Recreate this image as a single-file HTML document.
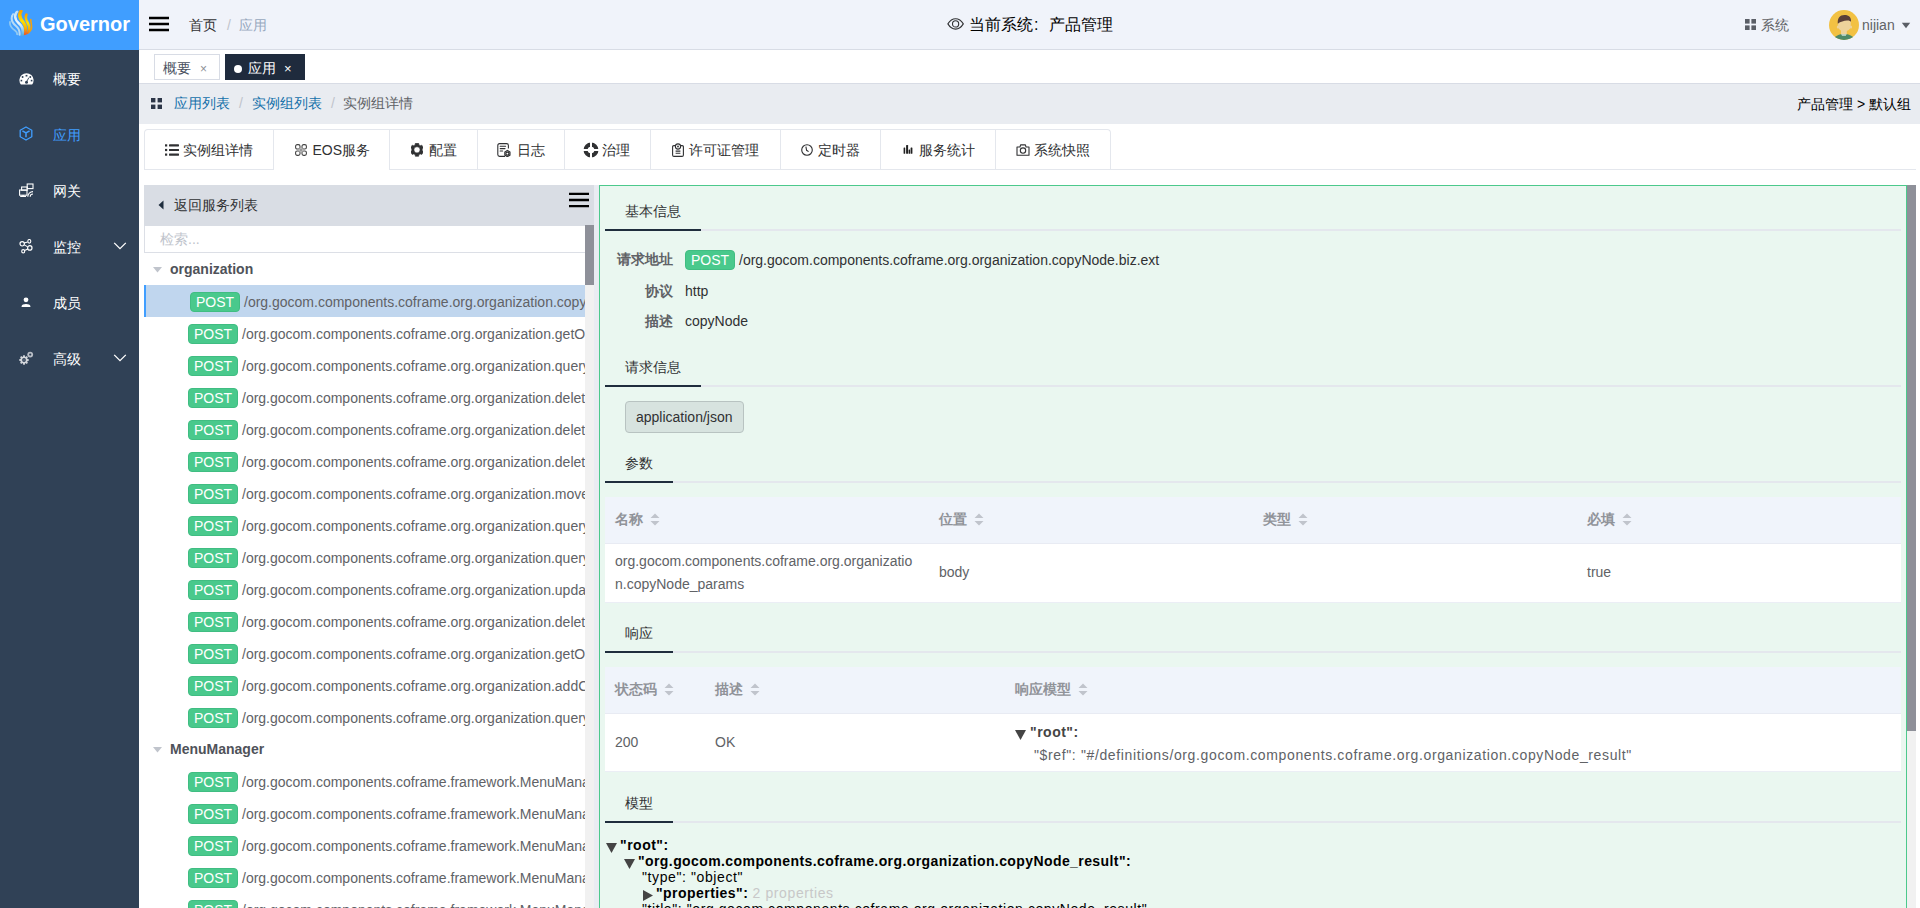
<!DOCTYPE html>
<html><head><meta charset="utf-8">
<style>
*{box-sizing:border-box;margin:0;padding:0}
html,body{width:1920px;height:908px;overflow:hidden;background:#fff;font-family:"Liberation Sans",sans-serif;font-size:14px;color:#303133}
.abs{position:absolute}
#side{position:absolute;left:0;top:0;width:139px;height:908px;background:#304156}
#logo{position:absolute;left:0;top:0;width:139px;height:50px;background:#409eff}
#logo .t{position:absolute;left:40px;top:12px;font-size:20px;font-weight:bold;color:#fff;line-height:24px}
.mi{position:absolute;left:0;width:139px;height:56px;color:#fff}
.mi .tx{position:absolute;left:53px;top:1px;line-height:56px;font-size:14px;font-weight:500}
.mi svg{position:absolute;left:19px;top:21px}
.mi .chev{position:absolute;left:113px;top:24px}
#hdr{position:absolute;left:139px;top:0;width:1781px;height:50px;background:#f0f3fa;border-bottom:1px solid #d8dce5}
#tags{position:absolute;left:139px;top:50px;width:1781px;height:34px;background:#fff;border-bottom:1px solid #d8dce5}
.tag{position:absolute;top:4px;height:26px;border:1px solid #d8dce5;line-height:24px;font-size:14px;color:#495060}
#bc{position:absolute;left:139px;top:84px;width:1781px;height:40px;background:#e9ecf1}
#tabs{position:absolute;left:144px;top:129px;width:1772px;height:41px;border-bottom:1px solid #e4e7ed}
#tabnav{position:absolute;left:0;top:0;height:41px;border:1px solid #e4e7ed;border-bottom:none;border-radius:4px 4px 0 0;display:flex}
.tt{position:absolute;top:1px;line-height:40px;color:#303133;white-space:nowrap}
.grp{line-height:16px;font-weight:bold;color:#4f5259;white-space:nowrap}
.post{height:20px;width:50px;border:1px solid #40bd82;background:#49c98c;color:#fff;border-radius:4px;line-height:18px;text-align:center;font-size:14px}
.path{line-height:16px;color:#606266;white-space:nowrap}
.tb{height:40px;line-height:40px;padding:0 20px;border-left:1px solid #e4e7ed;color:#303133;font-size:14px;white-space:nowrap;display:flex;align-items:center}
.tb:first-child{border-left:none}
.tb svg{margin-right:4px}
#lp{position:absolute;left:144px;top:185px;width:450px;height:723px;background:#fff;overflow:hidden}
#lph{position:absolute;left:0;top:0;width:450px;height:41px;background:#d9dde4}
#gap{position:absolute;left:594px;top:185px;width:5px;height:723px;background:#e9ecf2}
#rp{position:absolute;left:599px;top:185px;width:1308px;height:723px;background:#eaf7f0;border:1px solid #4cc98c;border-bottom:none;overflow:hidden}
#sb2{position:absolute;left:1907px;top:185px;width:9px;height:723px;background:#f1f1f1}
#sb2 .th{position:absolute;left:0;top:0;width:9px;height:546px;background:#8e9099}
</style></head><body>
<div id="side">
  <div id="logo">
    <svg class="abs" style="left:8px;top:10px" width="26" height="26" viewBox="0 0 26 26">
      <defs>
        <linearGradient id="lgo" x1="0" y1="0" x2="0" y2="1"><stop offset="0" stop-color="#f9a000"/><stop offset="0.45" stop-color="#ffe000"/><stop offset="0.75" stop-color="#f7b000"/><stop offset="1" stop-color="#e8602a"/></linearGradient>
        <clipPath id="lgc"><circle cx="13" cy="13" r="12.9"/></clipPath><linearGradient id="lgb" x1="0" y1="0" x2="0" y2="1"><stop offset="0" stop-color="#bfe0f5"/><stop offset="0.5" stop-color="#eef6fb"/><stop offset="1" stop-color="#56b0e0"/></linearGradient>
      </defs>
      <g clip-path="url(#lgc)"><path d="M13 1 C10.5 4.5 12 8.5 15 12 C17.5 15 18.5 19 17 24" stroke="url(#lgo)" stroke-width="3.4" fill="none" stroke-linecap="round"/>
      <path d="M18.5 4.5 C17 7 18 10 20 13.5 C21.8 17 21.5 21 19.5 24" stroke="url(#lgo)" stroke-width="2.6" fill="none" stroke-linecap="round"/>
      <path d="M22.8 9.5 C22.5 12 24 15 23.5 18.5 C23 21 22 22.5 20.5 24" stroke="#f2a010" stroke-width="1.6" fill="none" stroke-linecap="round"/>
      <path d="M9 1.5 C5.5 6 7.5 10.5 11 13.5 C14 16 15.5 20 14.5 25" stroke="url(#lgb)" stroke-width="2.6" fill="none" stroke-linecap="round"/>
      <path d="M5 4 C2 9 4.5 13 8 16 C11 18.5 12 21.5 11.5 25" stroke="#c6e2f4" stroke-width="2" fill="none" stroke-linecap="round" opacity="0.9"/>
      <path d="M2 12 C1.5 15.5 4 18.5 7 20.5 C9 22 9.5 23.5 9 25" stroke="#9fd0ee" stroke-width="1.8" fill="none" stroke-linecap="round" opacity="0.85"/>
    </g></svg>
    <span class="t">Governor</span>
  </div>
  <div class="mi" style="top:50px">
    <svg width="15" height="12" viewBox="0 0 15 12" style="left:19px;top:23px"><path d="M1.9 11.6 A7.1 7.1 0 1 1 13.1 11.6 Z" fill="#fff"/><rect x="6.6" y="1.9" width="1.8" height="1.6" fill="#304156"/><circle cx="3.6" cy="4" r="0.95" fill="#304156"/><circle cx="11.3" cy="4" r="0.95" fill="#304156"/><rect x="1.6" y="6.8" width="1.6" height="1.6" fill="#304156"/><rect x="11.8" y="6.8" width="1.6" height="1.6" fill="#304156"/><circle cx="7.5" cy="9.3" r="1.5" fill="#304156"/><path d="M7.3 9.3 L9.9 4.6" stroke="#304156" stroke-width="0.9"/></svg>
    <span class="tx">概要</span>
  </div>
  <div class="mi" style="top:106px;color:#409eff">
    <svg width="14" height="15" viewBox="0 0 14 15" style="left:19px;top:20px"><path d="M7 1 L12.8 4.2 L12.8 10.8 L7 14 L1.2 10.8 L1.2 4.2 Z" stroke="#409eff" stroke-width="1.3" fill="none" stroke-linejoin="round"/><path d="M3.4 4.9 L7 7 L10.6 4.9 M7 7 L7 11.2" stroke="#409eff" stroke-width="1.5" fill="none"/></svg>
    <span class="tx">应用</span>
  </div>
  <div class="mi" style="top:162px">
    <svg width="15" height="15" viewBox="0 0 15 15" style="left:19px;top:21px"><rect x="8.2" y="1" width="5.8" height="4.6" stroke="#fff" stroke-width="1.1" fill="none"/><rect x="2.6" y="4" width="5.6" height="3.2" stroke="#fff" stroke-width="1.1" fill="none"/><rect x="0.6" y="7" width="7.4" height="5.2" stroke="#fff" stroke-width="1.1" fill="none"/><path d="M1.2 13.4 H7 M4.1 12 V13.4" stroke="#fff" stroke-width="1.3"/><path d="M8.8 13.8 A5.2 5.2 0 0 1 14 8.6 M11.2 13.8 A2.8 2.8 0 0 1 14 11" stroke="#fff" stroke-width="1.1" fill="none"/></svg>
    <span class="tx">网关</span>
  </div>
  <div class="mi" style="top:218px">
    <svg width="15" height="15" viewBox="0 0 15 15" style="left:19px;top:21px"><circle cx="3.2" cy="4.8" r="2.2" stroke="#fff" stroke-width="1.2" fill="none"/><circle cx="10.8" cy="8.9" r="2.2" stroke="#fff" stroke-width="1.2" fill="none"/><ellipse cx="10.3" cy="2.3" rx="1.5" ry="1.8" stroke="#fff" stroke-width="1.1" fill="none"/><ellipse cx="4.2" cy="12.3" rx="1.5" ry="1.7" stroke="#fff" stroke-width="1.1" fill="none"/><path d="M5.3 5.9 L8.7 7.9 M8.8 9.9 L5.6 11.4 M5.3 4 L8.6 2.9" stroke="#fff" stroke-width="1.1"/></svg>
    <span class="tx">监控</span>
    <svg class="chev" width="14" height="8" viewBox="0 0 14 8" style="left:113px;top:24px"><path d="M1.2 0.9 L7 6.7 L12.8 0.9" stroke="#fff" stroke-width="1.3" fill="none"/></svg>
  </div>
  <div class="mi" style="top:274px">
    <svg width="10" height="11" viewBox="0 0 10 11" style="left:21px;top:23px"><circle cx="5" cy="2.8" r="2.4" fill="#fff"/><path d="M0.6 9.2 C0.6 6.4 9.4 6.4 9.4 9.2 L9.4 10 L0.6 10 Z" fill="#fff"/></svg>
    <span class="tx">成员</span>
  </div>
  <div class="mi" style="top:330px">
    <svg width="15" height="14" viewBox="0 0 15 14" style="left:19px;top:21px"><g fill="#d4d7dc"><rect x="4.05" y="4.3" width="1.9" height="9.4" transform="rotate(0 5 9)"/><rect x="4.05" y="4.3" width="1.9" height="9.4" transform="rotate(45 5 9)"/><rect x="4.05" y="4.3" width="1.9" height="9.4" transform="rotate(90 5 9)"/><rect x="4.05" y="4.3" width="1.9" height="9.4" transform="rotate(135 5 9)"/><circle cx="5" cy="9" r="3.6"/></g><circle cx="5" cy="9" r="1.9" fill="#304156"/><circle cx="5" cy="9" r="0.7" fill="#8a93a0"/><circle cx="11.2" cy="3.6" r="2.9" fill="#b9bec6"/><circle cx="11.2" cy="3.6" r="1.1" fill="#304156"/></svg>
    <span class="tx">高级</span>
    <svg class="chev" width="14" height="8" viewBox="0 0 14 8" style="left:113px;top:24px"><path d="M1.2 0.9 L7 6.7 L12.8 0.9" stroke="#fff" stroke-width="1.3" fill="none"/></svg>
  </div>
</div>
<div id="hdr">
  <svg class="abs" style="left:10px;top:16px" width="20" height="16" viewBox="0 0 20 16"><path d="M0 2 H20 M0 8 H20 M0 14 H20" stroke="#000" stroke-width="2.6"/></svg>
  <span class="abs" style="left:50px;top:17px;line-height:16px;color:#303133">首页</span>
  <span class="abs" style="left:88px;top:17px;line-height:16px;color:#c0c4cc">/</span>
  <span class="abs" style="left:100px;top:17px;line-height:16px;color:#97a8be">应用</span>
  <svg class="abs" style="left:808px;top:18px" width="18" height="12" viewBox="0 0 18 12"><path d="M0.9 5.9 C3.5 1.6 6 0.7 8.6 0.7 C11.2 0.7 13.7 1.6 16.3 5.9 C13.7 10.2 11.2 11.1 8.6 11.1 C6 11.1 3.5 10.2 0.9 5.9Z" stroke="#303133" stroke-width="1.1" fill="none"/><circle cx="8.6" cy="5.9" r="3.1" stroke="#303133" stroke-width="1.1" fill="none"/></svg>
  <span class="abs" style="left:830px;top:16px;line-height:18px;font-size:16px;color:#000">当前系统<span style="display:inline-block;width:16px;padding-left:1px">:</span>产品管理</span>
  <svg class="abs" style="left:1606px;top:19px" width="11" height="11" viewBox="0 0 11 11"><g fill="#5a5e66"><rect x="0" y="0" width="4.6" height="4.6"/><rect x="6.4" y="0" width="4.6" height="4.6"/><rect x="0" y="6.4" width="4.6" height="4.6"/><rect x="6.4" y="6.4" width="4.6" height="4.6"/></g></svg>
  <span class="abs" style="left:1622px;top:17px;line-height:16px;color:#606266">系统</span>
  <svg class="abs" style="left:1690px;top:10px" width="30" height="30" viewBox="0 0 30 30"><defs><clipPath id="av"><circle cx="15" cy="15" r="15"/></clipPath></defs><circle cx="15" cy="15" r="15" fill="#f2c143"/><g clip-path="url(#av)"><path d="M3.5 31 C5 26 10 24 15 24 C20 24 25 26 26.5 31Z" fill="#4e8a68"/><rect x="12" y="18" width="5.8" height="6.4" fill="#eed39b"/><path d="M12.3 24.2 H17.5 L16.8 25.8 H13Z" fill="#cfe0d8"/><ellipse cx="8.9" cy="17" rx="1.1" ry="1.6" fill="#eed39b"/><ellipse cx="22" cy="17" rx="1.1" ry="1.6" fill="#eed39b"/><path d="M9 12 C9 9 11.5 8 15.3 8 C19 8 21.8 9.5 21.8 12.5 L21.6 17 C21.2 19.5 19 21.2 15.3 21.2 C11.8 21.2 9.5 19.5 9.2 17Z" fill="#eed39b"/><path d="M8.8 13.8 C8.3 8 10.8 4.9 15.5 4.9 C20 4.9 22.5 7.5 22 11.8 C21 10.8 19.8 10.2 18 10.5 C15 10.9 11.5 11.5 8.8 13.8Z" fill="#5b4038"/></g></svg>
  <span class="abs" style="left:1723px;top:17px;line-height:16px;color:#606266">nijian</span>
  <svg class="abs" style="left:1762px;top:22px" width="10" height="7" viewBox="0 0 10 7"><path d="M0.8 0.8 L9.2 0.8 L5 6.2Z" fill="#5a5e66"/></svg>
</div>
<div id="tags">
  <div class="tag" style="left:15px;width:66px;color:#495060"><span class="abs" style="left:8px;top:5px;line-height:16px">概要</span><span class="abs" style="left:45px;top:6px;line-height:16px;font-size:12px;color:#8e9097">×</span></div>
  <div class="tag" style="left:86px;width:80px;background:#1f2b3d;border-color:#1f2b3d;color:#fff"><span class="abs" style="left:8px;top:10px;width:8px;height:8px;border-radius:50%;background:#fff"></span><span class="abs" style="left:22px;top:5px;line-height:16px">应用</span><span class="abs" style="left:58px;top:6px;line-height:16px;font-size:13px">×</span></div>
</div>
<div id="bc">
  <svg class="abs" style="left:12px;top:14px" width="11" height="11" viewBox="0 0 11 11"><g fill="#2c3648"><rect x="0" y="0" width="4.4" height="4.4"/><rect x="6.6" y="0" width="4.4" height="4.4"/><rect x="0" y="6.6" width="4.4" height="4.4"/><rect x="6.6" y="6.6" width="4.4" height="4.4"/></g></svg>
  <span class="abs" style="left:35px;top:11px;line-height:16px;color:#1470aa">应用列表</span>
  <span class="abs" style="left:100px;top:11px;line-height:16px;color:#c0c4cc">/</span>
  <span class="abs" style="left:113px;top:11px;line-height:16px;color:#1470aa">实例组列表</span>
  <span class="abs" style="left:192px;top:11px;line-height:16px;color:#c0c4cc">/</span>
  <span class="abs" style="left:204px;top:11px;line-height:16px;color:#606266">实例组详情</span>
  <span class="abs" style="left:1658px;top:12px;line-height:16px;color:#000">产品管理 &gt; 默认组</span>
</div>
<div id="tabs"><div id="tabnav" style="width:967px"></div>
<div class="abs" style="left:129px;top:1px;width:1px;height:40px;background:#e4e7ed"></div>
<div class="abs" style="left:245px;top:1px;width:1px;height:40px;background:#e4e7ed"></div>
<div class="abs" style="left:333px;top:1px;width:1px;height:40px;background:#e4e7ed"></div>
<div class="abs" style="left:420px;top:1px;width:1px;height:40px;background:#e4e7ed"></div>
<div class="abs" style="left:506px;top:1px;width:1px;height:40px;background:#e4e7ed"></div>
<div class="abs" style="left:636px;top:1px;width:1px;height:40px;background:#e4e7ed"></div>
<div class="abs" style="left:736px;top:1px;width:1px;height:40px;background:#e4e7ed"></div>
<div class="abs" style="left:851px;top:1px;width:1px;height:40px;background:#e4e7ed"></div>
<div class="abs" style="left:130px;top:40px;width:115px;height:2px;background:#fff"></div>
<svg class="abs" style="left:21px;top:15px" width="14" height="12" viewBox="0 0 14 12"><g fill="#303133"><rect x="0" y="0.3" width="2.2" height="2.2"/><rect x="0" y="4.9" width="2.2" height="2.2"/><rect x="0" y="9.5" width="2.2" height="2.2"/><rect x="4" y="0.3" width="10" height="2.2" rx="0.4"/><rect x="4" y="4.9" width="10" height="2.2" rx="0.4"/><rect x="4" y="9.5" width="10" height="2.2" rx="0.4"/></g></svg>
<span class="abs tt" style="left:38.5px">实例组详情</span>
<svg class="abs" style="left:151px;top:15px" width="12" height="12" viewBox="0 0 12 12"><g stroke="#444" stroke-width="1.1" fill="none"><rect x="0.6" y="0.6" width="4.4" height="4.4" rx="1.6"/><rect x="7" y="0.6" width="4.4" height="4.4" rx="1.6"/><rect x="0.6" y="7" width="4.4" height="4.4" rx="1.6"/><rect x="7" y="7" width="4.4" height="4.4" rx="1.6"/></g><path d="M4 4 L8 8 M8 4 L4 8" stroke="#999" stroke-width="1.6"/></svg>
<span class="abs tt" style="left:168.5px">EOS服务</span>
<svg class="abs" style="left:267px;top:14px" width="12" height="14" viewBox="0 0 12 14"><path fill="#303133" fill-rule="evenodd" stroke="#303133" stroke-width="0.6" stroke-linejoin="round" d="M4.05 1.98 L4.38 0.30 L7.62 0.30 L7.95 1.98 L9.20 2.70 L10.82 2.15 L12.44 4.95 L11.15 6.08 L11.15 7.52 L12.44 8.65 L10.82 11.45 L9.20 10.90 L7.95 11.62 L7.62 13.30 L4.38 13.30 L4.05 11.62 L2.80 10.90 L1.18 11.45 L-0.44 8.65 L0.85 7.52 L0.85 6.08 L-0.44 4.95 L1.18 2.15 L2.80 2.70Z M6 3.7 A3.1 3.1 0 1 0 6 9.9 A3.1 3.1 0 1 0 6 3.7Z"/></svg>
<span class="abs tt" style="left:284.5px">配置</span>
<svg class="abs" style="left:353px;top:14px" width="14" height="14" viewBox="0 0 14 14"><g stroke="#303133" stroke-width="1.1" fill="none"><path d="M8 13.4 H2.6 Q0.8 13.4 0.8 11.6 V2.4 Q0.8 0.6 2.6 0.6 H9.6 Q11.4 0.6 11.4 2.4 V5.6"/><path d="M3.2 3.2 H8.6 M3.2 5.6 H8 M3.2 8 H5.6" stroke-linecap="round"/><circle cx="10.4" cy="10.6" r="1.5"/></g><path d="M10.4 7.5 L12.9 9 L12.9 12.1 L10.4 13.6 L7.9 12.1 L7.9 9Z" stroke="#303133" stroke-width="1.3" fill="none"/></svg>
<span class="abs tt" style="left:372.5px">日志</span>
<svg class="abs" style="left:439px;top:13px" width="16" height="16" viewBox="0 0 16 16"><circle cx="8" cy="8" r="5.4" stroke="#303133" stroke-width="4.2" fill="none"/><path d="M8 0 V16 M0 8 H16" stroke="#fff" stroke-width="2"/></svg>
<span class="abs tt" style="left:457.5px">治理</span>
<svg class="abs" style="left:528px;top:14px" width="12" height="14" viewBox="0 0 12 14"><g stroke="#303133" stroke-width="1.1" fill="none"><path d="M3.6 2.6 H1.8 Q0.6 2.6 0.6 3.8 V12 Q0.6 13.4 2 13.4 H10 Q11.4 13.4 11.4 12 V3.8 Q11.4 2.6 10.2 2.6 H8.4"/><circle cx="6" cy="3.5" r="2.6"/><path d="M3.6 8.1 H8.4 M3.6 10.3 H8.4"/></g><circle cx="6" cy="3.5" r="0.9" fill="#303133"/></svg>
<span class="abs tt" style="left:544.5px">许可证管理</span>
<svg class="abs" style="left:657px;top:15px" width="12" height="12" viewBox="0 0 12 12"><circle cx="6" cy="6" r="5.3" stroke="#303133" stroke-width="1.1" fill="none"/><path d="M4.9 2.6 L5.6 6.3 L7.6 7.6" stroke="#303133" stroke-width="1.1" fill="none"/></svg>
<span class="abs tt" style="left:673.5px">定时器</span>
<svg class="abs" style="left:759px;top:16px" width="10" height="9" viewBox="0 0 10 9"><g fill="#222"><rect x="0.6" y="2.6" width="1.6" height="6.2" rx="0.5"/><rect x="3.1" y="0" width="2" height="8.8" rx="0.6"/><rect x="5.6" y="4.6" width="1.5" height="4.2" rx="0.5"/><rect x="7.6" y="2.6" width="1.8" height="6.2" rx="0.5"/></g></svg>
<span class="abs tt" style="left:774.5px">服务统计</span>
<svg class="abs" style="left:872px;top:15px" width="14" height="12" viewBox="0 0 14 12"><g stroke="#303133" stroke-width="1.1" fill="none" stroke-linejoin="round"><path d="M1 3 H4 L4.6 0.9 H9.4 L10 3 H13 V11.3 H1 Z"/><circle cx="7" cy="6.6" r="2.7"/></g></svg>
<span class="abs tt" style="left:889.5px">系统快照</span>
</div>
<div id="lp">
<div id="lph">
<svg class="abs" style="left:14px;top:15px" width="6" height="10" viewBox="0 0 6 10"><path d="M5.5 0.5 L5.5 9.5 L0.5 5Z" fill="#1f2d3d"/></svg>
<span class="abs" style="left:30px;top:12px;line-height:16px;color:#303133">返回服务列表</span>
<svg class="abs" style="left:425px;top:7px" width="20" height="16" viewBox="0 0 20 16"><path d="M0 1.9 H20 M0 8 H20 M0 14.1 H20" stroke="#000" stroke-width="2.3"/></svg>
</div>
<div class="abs" style="left:0;top:41px;width:441px;height:682px;overflow:hidden">
<div class="abs" style="left:0;top:0;width:441px;height:27px;border:1px solid #dcdfe6;border-top:none;border-right:none;background:#fff"><span class="abs" style="left:15px;top:5px;line-height:16px;color:#c0c4cc">检索...</span></div>
<svg class="abs" style="left:9px;top:41px" width="9" height="6" viewBox="0 0 9 6"><path d="M0 0 H9 L4.5 5.5Z" fill="#c0c4cc"/></svg><span class="abs grp" style="left:26px;top:35px">organization</span>
<div class="abs" style="left:0;top:59px;width:441px;height:32px;background:#c0d6ee;border-left:2px solid #409eff"></div><span class="abs post" style="left:46px;top:66px">POST</span><span class="abs path" style="left:100px;top:68px">/org.gocom.components.coframe.org.organization.copyNode.biz.ext</span>
<span class="abs post" style="left:44px;top:98px">POST</span><span class="abs path" style="left:98px;top:100px">/org.gocom.components.coframe.org.organization.getOrgTree.biz.ext</span>
<span class="abs post" style="left:44px;top:130px">POST</span><span class="abs path" style="left:98px;top:132px">/org.gocom.components.coframe.org.organization.queryOrgs.biz.ext</span>
<span class="abs post" style="left:44px;top:162px">POST</span><span class="abs path" style="left:98px;top:164px">/org.gocom.components.coframe.org.organization.deleteOrg.biz.ext</span>
<span class="abs post" style="left:44px;top:194px">POST</span><span class="abs path" style="left:98px;top:196px">/org.gocom.components.coframe.org.organization.deleteOrgs.biz.ext</span>
<span class="abs post" style="left:44px;top:226px">POST</span><span class="abs path" style="left:98px;top:228px">/org.gocom.components.coframe.org.organization.deleteNode.biz.ext</span>
<span class="abs post" style="left:44px;top:258px">POST</span><span class="abs path" style="left:98px;top:260px">/org.gocom.components.coframe.org.organization.moveNode.biz.ext</span>
<span class="abs post" style="left:44px;top:290px">POST</span><span class="abs path" style="left:98px;top:292px">/org.gocom.components.coframe.org.organization.queryOrgTree.biz.ext</span>
<span class="abs post" style="left:44px;top:322px">POST</span><span class="abs path" style="left:98px;top:324px">/org.gocom.components.coframe.org.organization.queryOrgChildren.biz.ext</span>
<span class="abs post" style="left:44px;top:354px">POST</span><span class="abs path" style="left:98px;top:356px">/org.gocom.components.coframe.org.organization.updateOrg.biz.ext</span>
<span class="abs post" style="left:44px;top:386px">POST</span><span class="abs path" style="left:98px;top:388px">/org.gocom.components.coframe.org.organization.deleteEmp.biz.ext</span>
<span class="abs post" style="left:44px;top:418px">POST</span><span class="abs path" style="left:98px;top:420px">/org.gocom.components.coframe.org.organization.getOrgById.biz.ext</span>
<span class="abs post" style="left:44px;top:450px">POST</span><span class="abs path" style="left:98px;top:452px">/org.gocom.components.coframe.org.organization.addChildOrg.biz.ext</span>
<span class="abs post" style="left:44px;top:482px">POST</span><span class="abs path" style="left:98px;top:484px">/org.gocom.components.coframe.org.organization.queryEmps.biz.ext</span>
<svg class="abs" style="left:9px;top:521px" width="9" height="6" viewBox="0 0 9 6"><path d="M0 0 H9 L4.5 5.5Z" fill="#c0c4cc"/></svg><span class="abs grp" style="left:26px;top:515px">MenuManager</span>
<span class="abs post" style="left:44px;top:546px">POST</span><span class="abs path" style="left:98px;top:548px">/org.gocom.components.coframe.framework.MenuManager.addMenu.biz.ext</span>
<span class="abs post" style="left:44px;top:578px">POST</span><span class="abs path" style="left:98px;top:580px">/org.gocom.components.coframe.framework.MenuManager.deleteMenu.biz.ext</span>
<span class="abs post" style="left:44px;top:610px">POST</span><span class="abs path" style="left:98px;top:612px">/org.gocom.components.coframe.framework.MenuManager.getMenu.biz.ext</span>
<span class="abs post" style="left:44px;top:642px">POST</span><span class="abs path" style="left:98px;top:644px">/org.gocom.components.coframe.framework.MenuManager.updateMenu.biz.ext</span>
<span class="abs post" style="left:44px;top:674px">POST</span><span class="abs path" style="left:98px;top:676px">/org.gocom.components.coframe.framework.MenuManager.queryMenu.biz.ext</span>
</div>
<div class="abs" style="left:441px;top:40px;width:9px;height:683px;background:#f1f1f1"><div class="abs" style="left:0;top:0;width:9px;height:60px;background:#8e9099"></div></div>
</div>
<div id="gap"></div>
<div id="rp">
<span class="abs " style="left:25px;top:17px;line-height:16px;color:#303133">基本信息</span><div class="abs " style="left:5px;top:43px;width:1296px;height:2px;background:#e4e7ed"></div><div class="abs " style="left:5px;top:43px;width:96px;height:2px;background:#1f2d3d"></div>
<span class="abs " style="left:17px;top:65px;line-height:16px;color:#606266;font-weight:bold">请求地址</span>
<span class="abs post" style="left:85px;top:64px;">POST</span>
<span class="abs " style="left:139px;top:66px;line-height:16px;color:#303133;white-space:nowrap">/org.gocom.components.coframe.org.organization.copyNode.biz.ext</span>
<span class="abs " style="left:45px;top:97px;line-height:16px;color:#606266;font-weight:bold">协议</span>
<span class="abs " style="left:85px;top:97px;line-height:16px;color:#303133">http</span>
<span class="abs " style="left:45px;top:127px;line-height:16px;color:#606266;font-weight:bold">描述</span>
<span class="abs " style="left:85px;top:127px;line-height:16px;color:#303133">copyNode</span>
<span class="abs " style="left:25px;top:173px;line-height:16px;color:#303133">请求信息</span><div class="abs " style="left:5px;top:199px;width:1296px;height:2px;background:#e4e7ed"></div><div class="abs " style="left:5px;top:199px;width:96px;height:2px;background:#1f2d3d"></div>
<div class="abs " style="left:25px;top:215px;width:119px;height:32px;background:#d7e3df;border:1px solid #b8c3c1;border-radius:4px"><span class="abs" style="left:10px;top:7px;line-height:16px;color:#303133">application/json</span></div>
<span class="abs " style="left:25px;top:269px;line-height:16px;color:#303133">参数</span><div class="abs " style="left:5px;top:295px;width:1296px;height:2px;background:#e4e7ed"></div><div class="abs " style="left:5px;top:295px;width:68px;height:2px;background:#1f2d3d"></div>
<div class="abs " style="left:5px;top:311px;width:1296px;height:47px;background:#f0f4fb;border-bottom:1px solid #e8ebf3"></div>
<div class="abs " style="left:5px;top:358px;width:1296px;height:59px;background:#fff;border-bottom:1px solid #ebeef5"></div>
<span class="abs " style="left:15px;top:325px;line-height:16px;color:#909399;font-weight:bold">名称</span>
<svg class="abs" style="left:50px;top:327px" width="10" height="13" viewBox="0 0 10 13"><path d="M5 0.5 L9.5 5 L0.5 5Z M5 12.5 L9.5 8 L0.5 8Z" fill="#c0c4cc"/></svg>
<span class="abs " style="left:339px;top:325px;line-height:16px;color:#909399;font-weight:bold">位置</span>
<svg class="abs" style="left:374px;top:327px" width="10" height="13" viewBox="0 0 10 13"><path d="M5 0.5 L9.5 5 L0.5 5Z M5 12.5 L9.5 8 L0.5 8Z" fill="#c0c4cc"/></svg>
<span class="abs " style="left:663px;top:325px;line-height:16px;color:#909399;font-weight:bold">类型</span>
<svg class="abs" style="left:698px;top:327px" width="10" height="13" viewBox="0 0 10 13"><path d="M5 0.5 L9.5 5 L0.5 5Z M5 12.5 L9.5 8 L0.5 8Z" fill="#c0c4cc"/></svg>
<span class="abs " style="left:987px;top:325px;line-height:16px;color:#909399;font-weight:bold">必填</span>
<svg class="abs" style="left:1022px;top:327px" width="10" height="13" viewBox="0 0 10 13"><path d="M5 0.5 L9.5 5 L0.5 5Z M5 12.5 L9.5 8 L0.5 8Z" fill="#c0c4cc"/></svg>
<span class="abs " style="left:15px;top:364px;line-height:23px;color:#606266;white-space:nowrap">org.gocom.components.coframe.org.organizatio<br>n.copyNode_params</span>
<span class="abs " style="left:339px;top:378px;line-height:16px;color:#606266">body</span>
<span class="abs " style="left:987px;top:378px;line-height:16px;color:#606266">true</span>
<span class="abs " style="left:25px;top:439px;line-height:16px;color:#303133">响应</span><div class="abs " style="left:5px;top:465px;width:1296px;height:2px;background:#e4e7ed"></div><div class="abs " style="left:5px;top:465px;width:68px;height:2px;background:#1f2d3d"></div>
<div class="abs " style="left:5px;top:481px;width:1296px;height:47px;background:#f0f4fb;border-bottom:1px solid #e8ebf3"></div>
<div class="abs " style="left:5px;top:528px;width:1296px;height:58px;background:#fff;border-bottom:1px solid #ebeef5"></div>
<span class="abs " style="left:15px;top:495px;line-height:16px;color:#909399;font-weight:bold">状态码</span>
<svg class="abs" style="left:64px;top:497px" width="10" height="13" viewBox="0 0 10 13"><path d="M5 0.5 L9.5 5 L0.5 5Z M5 12.5 L9.5 8 L0.5 8Z" fill="#c0c4cc"/></svg>
<span class="abs " style="left:115px;top:495px;line-height:16px;color:#909399;font-weight:bold">描述</span>
<svg class="abs" style="left:150px;top:497px" width="10" height="13" viewBox="0 0 10 13"><path d="M5 0.5 L9.5 5 L0.5 5Z M5 12.5 L9.5 8 L0.5 8Z" fill="#c0c4cc"/></svg>
<span class="abs " style="left:415px;top:495px;line-height:16px;color:#909399;font-weight:bold">响应模型</span>
<svg class="abs" style="left:478px;top:497px" width="10" height="13" viewBox="0 0 10 13"><path d="M5 0.5 L9.5 5 L0.5 5Z M5 12.5 L9.5 8 L0.5 8Z" fill="#c0c4cc"/></svg>
<span class="abs " style="left:15px;top:548px;line-height:16px;color:#606266">200</span>
<span class="abs " style="left:115px;top:548px;line-height:16px;color:#606266">OK</span>
<svg class="abs" style="left:415px;top:544px" width="11" height="10" viewBox="0 0 11 10"><path d="M0 0 H11 L5.5 10Z" fill="#444"/></svg>
<span class="abs " style="left:430px;top:538px;line-height:16px;color:#444;font-weight:bold;letter-spacing:0.5px">"root":</span>
<span class="abs " style="left:434px;top:561px;line-height:16px;color:#606266;white-space:nowrap;letter-spacing:0.63px">"$ref": "#/definitions/org.gocom.components.coframe.org.organization.copyNode_result"</span>
<span class="abs " style="left:25px;top:609px;line-height:16px;color:#303133">模型</span><div class="abs " style="left:5px;top:635px;width:1296px;height:2px;background:#e4e7ed"></div><div class="abs " style="left:5px;top:635px;width:68px;height:2px;background:#1f2d3d"></div>
<svg class="abs" style="left:6px;top:657px" width="11" height="10" viewBox="0 0 11 10"><path d="M0 0 H11 L5.5 10Z" fill="#444"/></svg>
<span class="abs " style="left:20px;top:651px;line-height:16px;color:#000;font-weight:bold;letter-spacing:0.5px">"root":</span>
<svg class="abs" style="left:24px;top:673px" width="11" height="10" viewBox="0 0 11 10"><path d="M0 0 H11 L5.5 10Z" fill="#444"/></svg>
<span class="abs " style="left:38px;top:667px;line-height:16px;color:#000;font-weight:bold;white-space:nowrap;letter-spacing:0.41px">"org.gocom.components.coframe.org.organization.copyNode_result":</span>
<span class="abs " style="left:42px;top:683px;line-height:16px;color:#000;white-space:nowrap;letter-spacing:0.6px">"type": "object"</span>
<svg class="abs" style="left:43px;top:704px" width="10" height="11" viewBox="0 0 10 11"><path d="M0 0 V11 L10 5.5Z" fill="#444"/></svg>
<span class="abs " style="left:56px;top:699px;line-height:16px;color:#000;font-weight:bold;white-space:nowrap;letter-spacing:0.45px">"properties": <span style="font-weight:normal;color:#c8c8c8;letter-spacing:0.6px">2 properties</span></span>
<span class="abs " style="left:42px;top:715px;line-height:16px;color:#000;white-space:nowrap;letter-spacing:0.58px">"title": "org.gocom.components.coframe.org.organization.copyNode_result"</span>
</div>
<div id="sb2"><div class="th"></div></div>
</body></html>
